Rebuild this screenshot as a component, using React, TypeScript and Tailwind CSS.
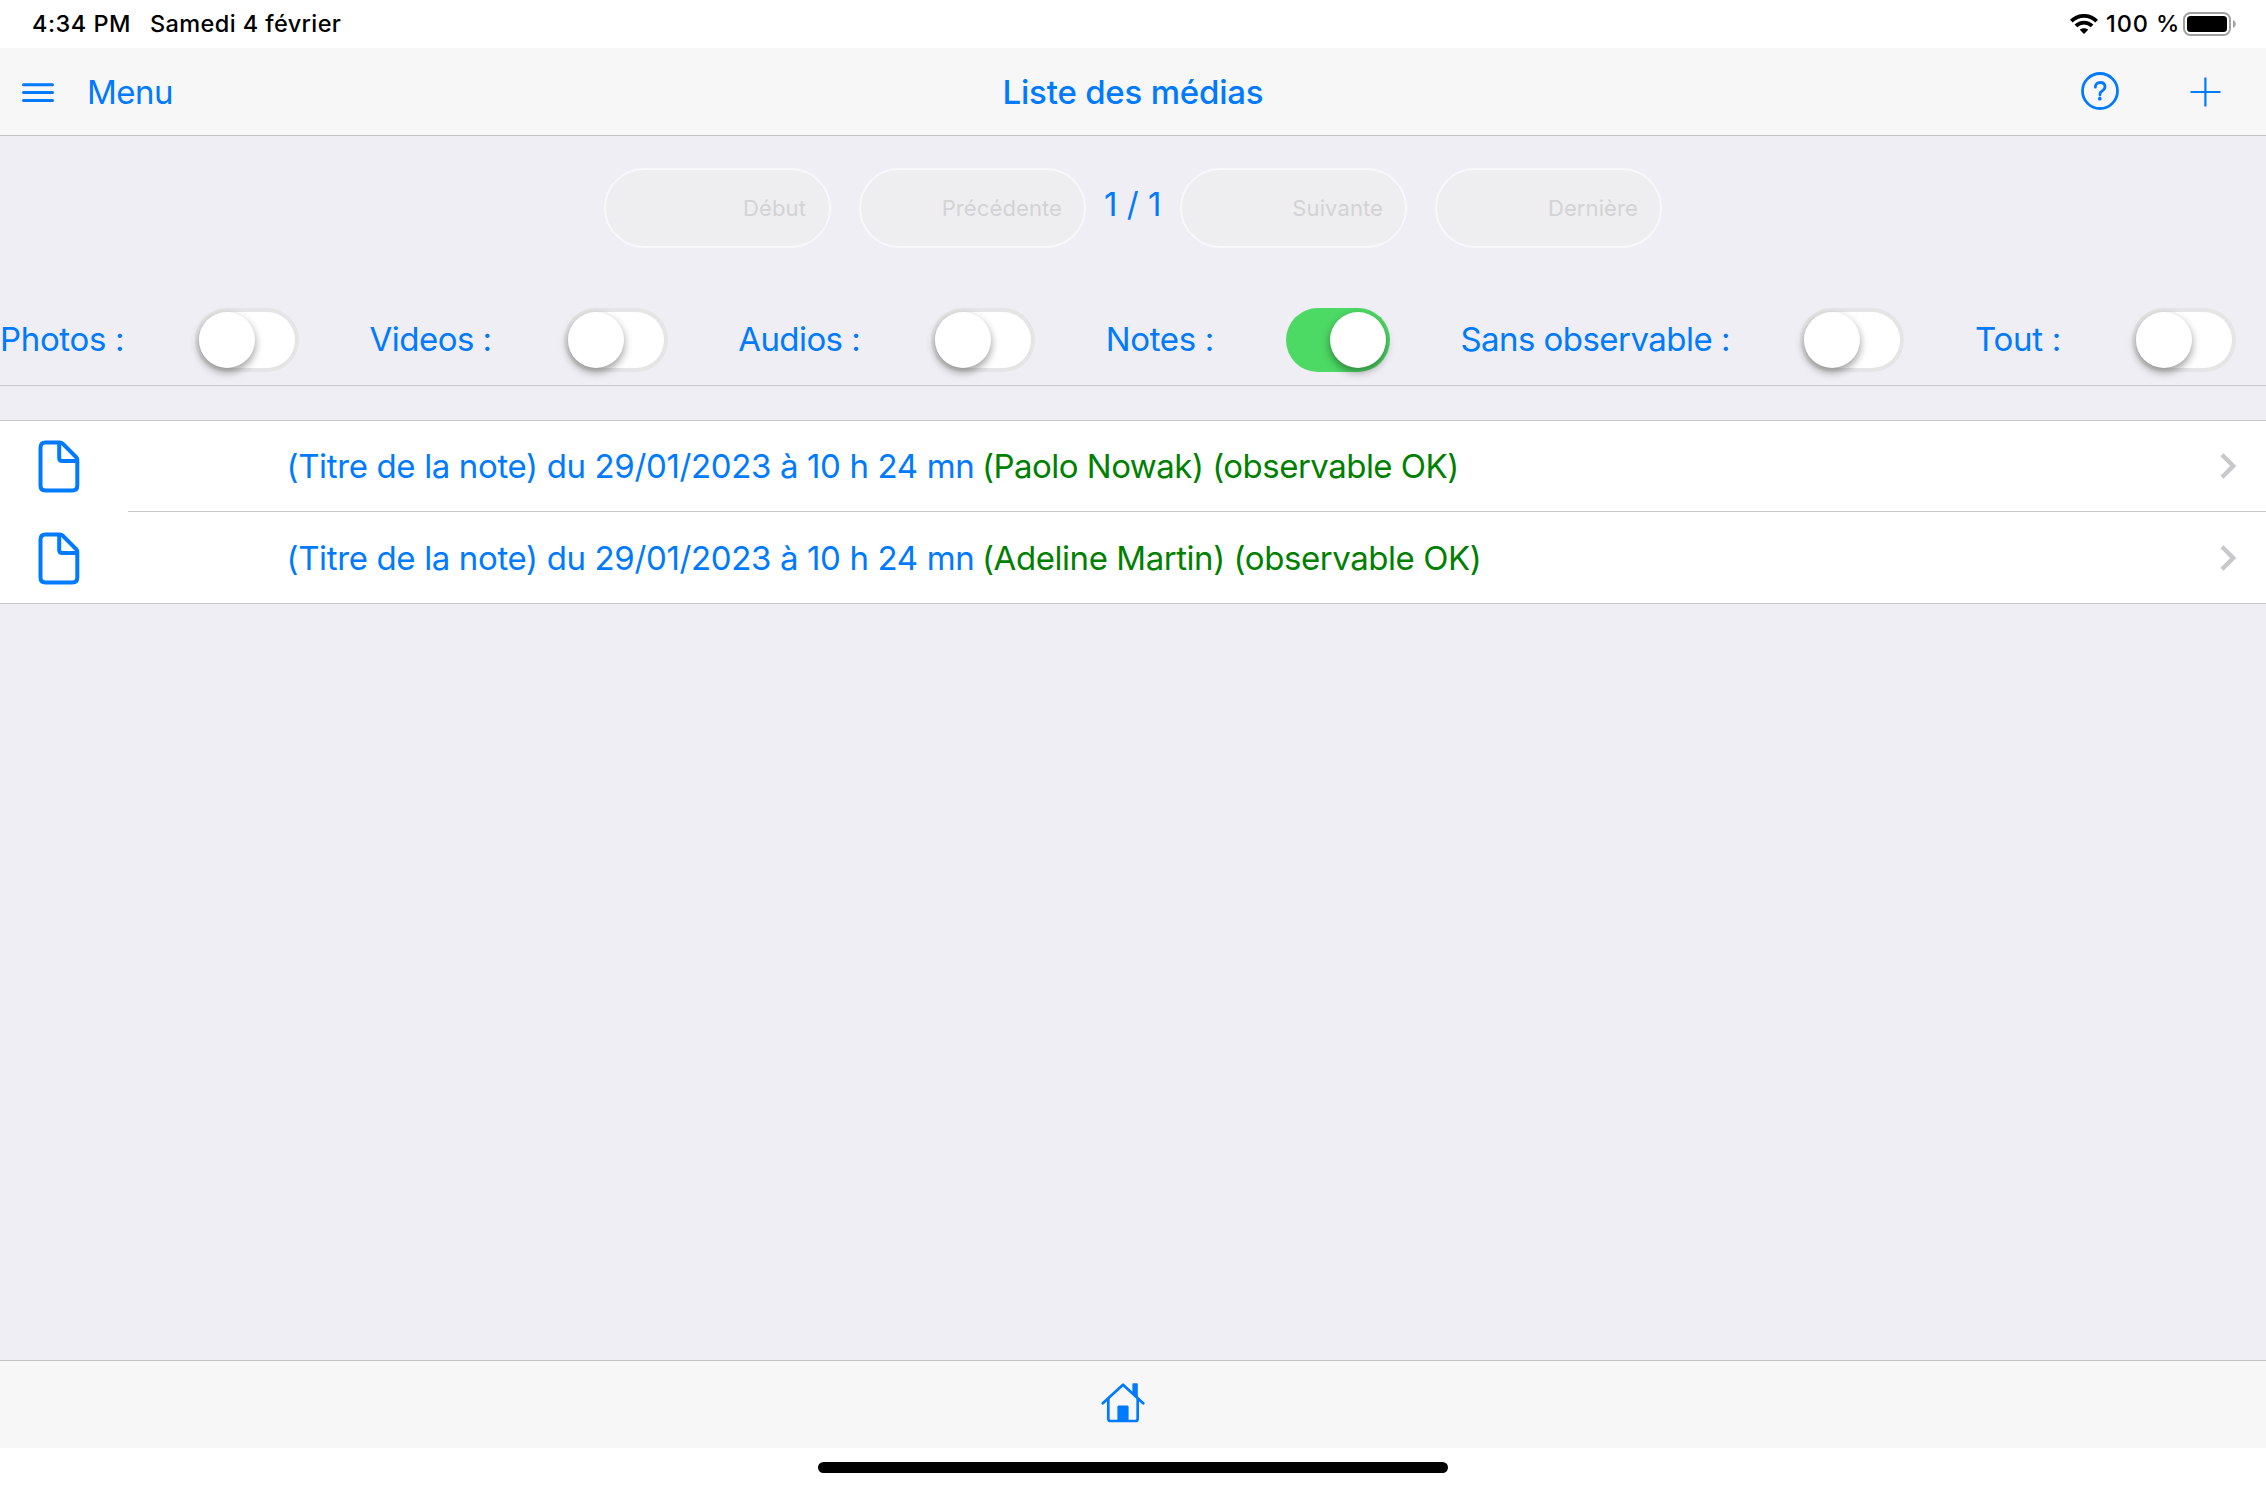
function MenuIcon() {
  return (
    <svg width="32" height="20" viewBox="0 0 32 20" fill="none" stroke="currentColor" strokeWidth="3" strokeLinecap="round">
      <path d="M1.5 1.7h29M1.5 9.5h29M1.5 17.4h29" />
    </svg>
  );
}

function WifiIcon() {
  return (
    <svg width="28" height="20" viewBox="0 0 28 20" fill="none" stroke="#000" strokeWidth="3.8">
      <path d="M1.3 7.1C8.4 0.1 19.6 0.1 26.7 7.1" />
      <path d="M5.9 11.9c4.6-4.4 11.6-4.4 16.2 0" />
      <path d="M14 20l-4.2-4.2c2.4-2 6-2 8.4 0z" fill="#000" stroke="none" />
    </svg>
  );
}

function BatteryIcon() {
  return (
    <svg width="54" height="24" viewBox="0 0 54 24">
      <rect x="1" y="1" width="46" height="22" rx="6.5" fill="none" stroke="#a0a0a0" strokeWidth="2" />
      <rect x="4" y="4" width="40" height="16" rx="3.5" fill="#000" />
      <path d="M50 8c3.6 1.4 3.6 6.6 0 8z" fill="#a0a0a0" />
    </svg>
  );
}

function HelpIcon() {
  return (
    <svg width="38" height="38" viewBox="0 0 38 38" fill="none" stroke="currentColor" strokeWidth="2.8">
      <circle cx="19" cy="19" r="17.5" />
      <path d="M14.3 15.2c0-2.8 2-4.7 4.9-4.7 2.900 0 4.800 1.700 4.800 4.200 0 1.900-1 3-2.600 4-1.600 1-2.400 1.800-2.400 3.500v.8" strokeLinecap="round" />
      <circle cx="18.8" cy="26.7" r="1.9" fill="currentColor" stroke="none" />
    </svg>
  );
}

function PlusIcon() {
  return (
    <svg width="31" height="30" viewBox="0 0 31 30" stroke="currentColor" strokeWidth="2.2">
      <path d="M15.4 0.500v29M0.500 15h30" />
    </svg>
  );
}

function NoteIcon() {
  return (
    <svg width="42" height="53" viewBox="0 0 42 53" fill="none" stroke="currentColor" strokeWidth="4" strokeLinejoin="round">
      <path d="M7.5 2.500h14c1.300 0 2.300.3 3.200 1.200L38 17c1 1 1.300 2 1.300 3.200v25.300c0 3.200-1.800 5-5 5H7.500c-3.200 0-5-1.800-5-5v-38c0-3.200 1.800-5 5-5z" />
      <path d="M21.200 3v15c0 2 1 3 3 3h14.500" />
    </svg>
  );
}

function ChevronIcon() {
  return (
    <svg width="17" height="28" viewBox="0 0 17 28" fill="none" stroke="#c7c7cc" strokeWidth="4.4">
      <path d="M2 2.700L13.200 14 2 25.300" />
    </svg>
  );
}

function HomeIcon() {
  return (
    <svg width="44" height="40" viewBox="0 0 44 40" fill="none" stroke="currentColor" strokeWidth="2.7" strokeLinecap="round" strokeLinejoin="round">
      <path d="M1.800 20.300L22 1.700l20.200 18.600" />
      <path d="M7.300 16v19.700c0 1.500.8 2.300 2.300 2.300h24.800c1.500 0 2.300-.8 2.300-2.300V16" />
      <path d="M31.400 1.500c0-.8.400-1.200 1.200-1.200h3c.8 0 1.200.4 1.200 1.200v14l-5.400-5z" fill="currentColor" stroke="none" />
      <path d="M16.400 38V24.300c0-1.200.6-1.800 1.800-1.800h7.600c1.200 0 1.800.6 1.800 1.800V38z" fill="currentColor" stroke="none" />
    </svg>
  );
}

function PageButton({ label, className }: { label: string; className: string }) {
  return (
    <button
      disabled
      className={`flex h-20 w-[227px] items-center justify-end rounded-[40px] border-2 border-[#f8f8fa] bg-[#eeeef0] text-[22px] tracking-[0.1px] text-[#d3d3d5] ${className}`}
    >
      {label}
    </button>
  );
}

function Toggle({ on }: { on?: boolean }) {
  return (
    <span className={`flex h-16 w-[104px] shrink-0 rounded-full p-1 ${on ? "bg-[#4cd964]" : "bg-[#e5e5e5]"}`}>
      <span className={`flex flex-1 rounded-full ${on ? "justify-end" : "justify-start bg-white"}`}>
        <span className="size-14 rounded-full bg-white shadow-[0_4px_8px_rgba(0,0,0,0.4)]" />
      </span>
    </span>
  );
}

const filters = [
  { label: "Photos :", className: "w-[195px] tracking-[-0.334px]" },
  { label: "Videos :", className: "w-[194px] tracking-[-0.527px]" },
  { label: "Audios :", className: "w-[193px] tracking-[-0.567px]" },
  { label: "Notes :", className: "w-[180px] tracking-[-0.360px]", on: true },
  { label: "Sans observable :", className: "w-[340px] tracking-[-0.539px]" },
  { label: "Tout :", className: "w-[157px] tracking-[-0.280px]" },
];

const notes = [
  { author: "(Paolo Nowak) (observable OK)", className: "tracking-[-0.522px]" },
  { author: "(Adeline Martin) (observable OK)", className: "tracking-[-0.443px]" },
];

export default function App() {
  return (
    <div className="flex h-[1488px] w-[2266px] flex-col overflow-hidden bg-[#efeef4] font-['Inter',sans-serif] text-[33px] leading-10 whitespace-nowrap text-[#007aff]">
      <div className="flex h-12 shrink-0 items-center bg-white pr-[29px] pl-8 text-[23.5px] font-[480] text-black">
        <span className="w-[118px] tracking-[0.49px]">4:34 PM</span>
        <span className="tracking-[0.4px]">Samedi 4 février</span>
        <div className="ml-auto flex items-center">
          <WifiIcon />
          <span className="ml-2 w-[77px] tracking-[0.9px]">100 %</span>
          <BatteryIcon />
        </div>
      </div>

      <header className="grid h-[88px] shrink-0 grid-cols-[1fr_auto_1fr] items-center border-b border-[#c4c4c4] bg-[#f7f7f8]">
        <div className="flex items-center pl-[22px]">
          <span className="pt-0.5">
            <MenuIcon />
          </span>
          <span className="ml-[33px] tracking-[-0.5px]">Menu</span>
        </div>
        <h1 className="pt-px font-[550] tracking-[-0.2px]">Liste des médias</h1>
        <div className="flex items-center justify-end gap-[71px] pr-[45px]">
          <span className="pb-0.5">
            <HelpIcon />
          </span>
          <PlusIcon />
        </div>
      </header>

      <div className="flex h-[144px] shrink-0 items-center justify-center">
        <PageButton label="Début" className="pr-[23px]" />
        <PageButton label="Précédente" className="ml-7 pr-[22px]" />
        <span className="w-[94px] pb-2 pl-[18px]">1 / 1</span>
        <PageButton label="Suivante" className="pr-[22px]" />
        <PageButton label="Dernière" className="ml-7 pr-[22px]" />
      </div>

      <div className="flex h-[106px] shrink-0 gap-[70.6px] border-b border-[#c8c7cc] pt-7">
        {filters.map((f) => (
          <label key={f.label} className="flex h-16 shrink-0 items-center">
            <span className={`shrink-0 pb-0.5 ${f.className}`}>{f.label}</span>
            <Toggle on={f.on} />
          </label>
        ))}
      </div>

      <ul className="mt-[34px] shrink-0 border-y border-[#c8c7cc] bg-white">
        {notes.map((n, i) => (
          <li key={n.author} className="flex h-[91px] pl-[38px]">
            <span className={`flex w-[90px] items-center ${i === 0 ? "" : "pt-0.5"}`}>
              <NoteIcon />
            </span>
            <div className={`flex flex-1 items-center pr-[29px] pl-[158.500px] ${i === 0 ? "border-b border-[#c8c7cc]" : "pt-px"}`}>
              <span className="w-[695.5px] tracking-[-0.360px]">(Titre de la note) du 29/01/2023 à 10 h 24 mn</span>
              <span className={`text-[#008000] ${n.className}`}>{n.author}</span>
              <span className="ml-auto">
                <ChevronIcon />
              </span>
            </div>
          </li>
        ))}
      </ul>

      <main className="flex-1" />

      <footer className="flex h-[88px] shrink-0 items-center justify-center border-t border-[#c4c4c4] bg-[#f7f7f8] pr-5 pb-1">
        <HomeIcon />
      </footer>
      <div className="flex h-10 shrink-0 justify-center bg-white pt-3.5">
        <div className="h-[11px] w-[630px] rounded-full bg-black" />
      </div>
    </div>
  );
}
